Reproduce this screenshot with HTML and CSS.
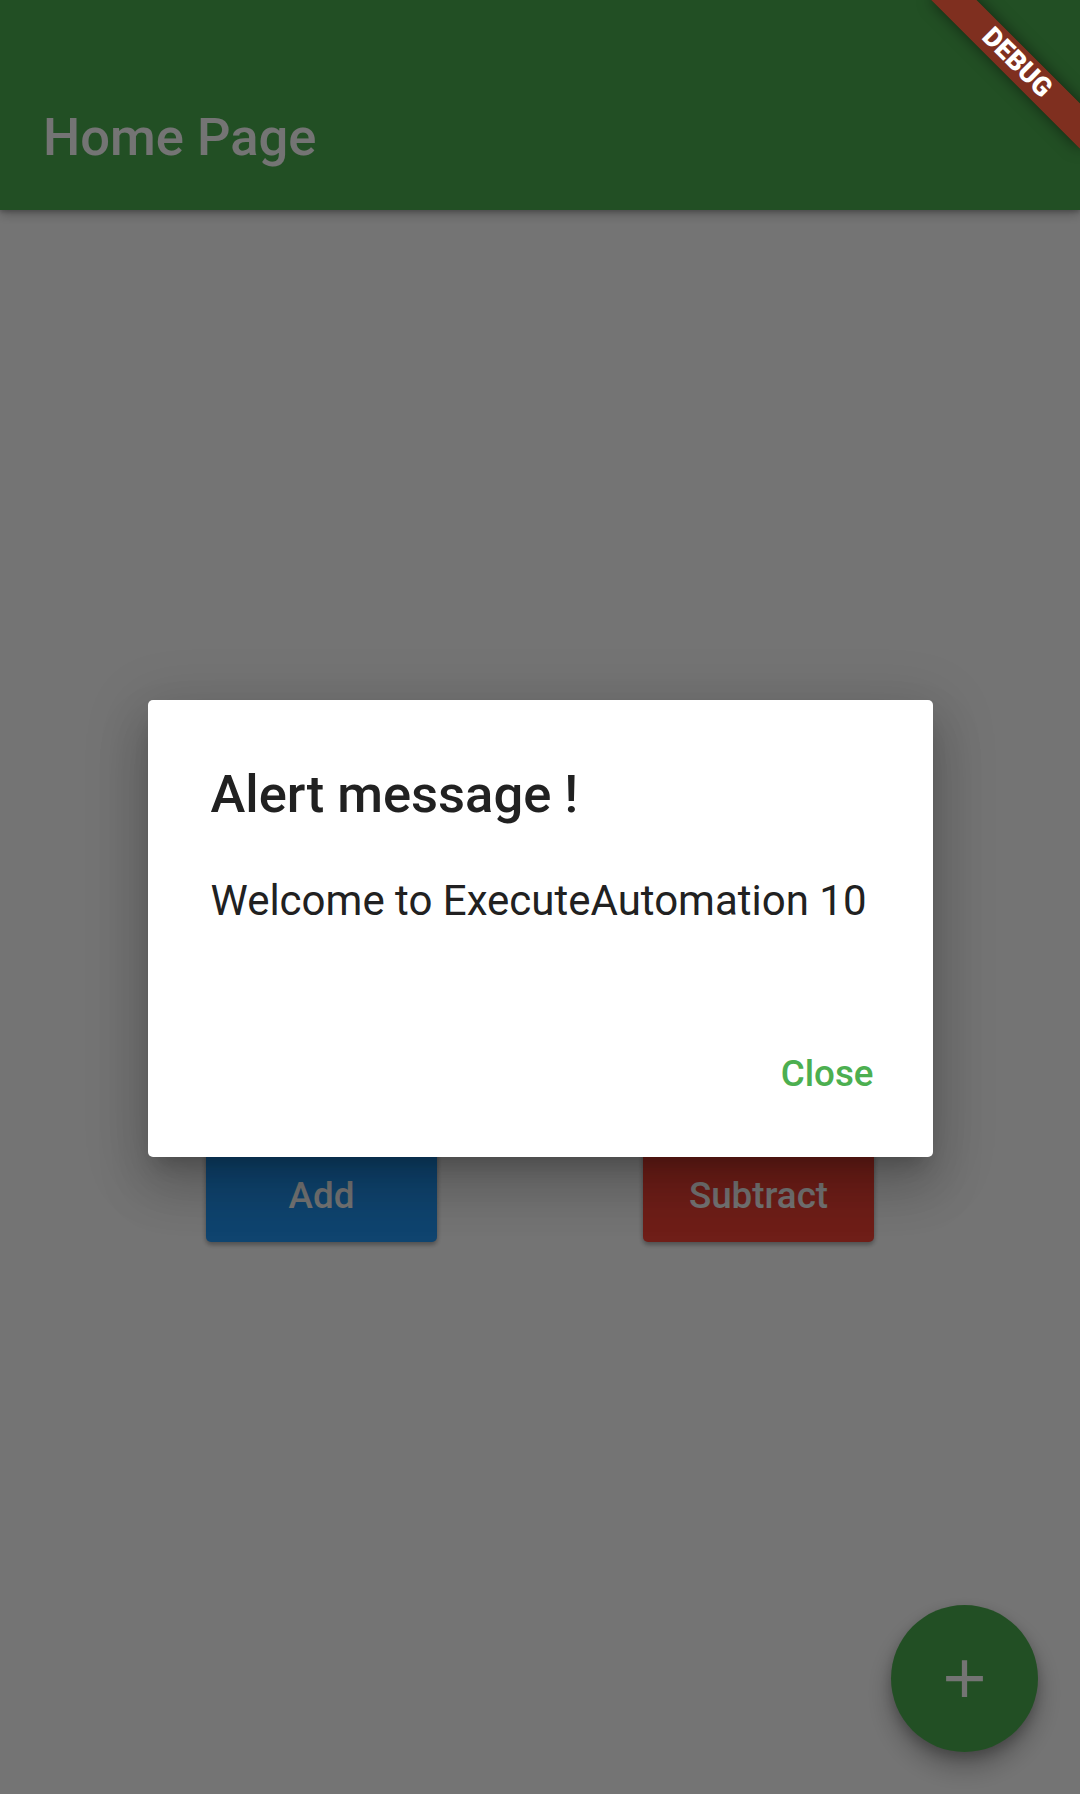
FILE: index.html
```
<!DOCTYPE html>
<html lang="en">
<head>
<meta charset="utf-8">
<title>Home Page</title>
<link rel="stylesheet" href="styles.css">
</head>
<body>
<div class="app">
  <header class="appbar">
    <div class="statusbar"></div>
    <div class="toolbar"><h1 class="title">Home Page</h1></div>
  </header>
  <main class="content">
    <div class="btn-row">
      <button class="btn btn-add">Add</button>
      <button class="btn btn-sub">Subtract</button>
    </div>
  </main>
  <button class="fab" aria-label="Increment">
    <svg class="fab-icon" viewBox="0 0 24 24" width="63" height="63"><path d="M19 13h-6v6h-2v-6H5v-2h6V5h2v6h6v2z" fill="#ffffff"/></svg>
  </button>
</div>
<div class="scrim"></div>
<div class="dialog-layer">
  <div class="dialog" role="alertdialog">
    <h2 class="dialog-title">Alert message !</h2>
    <p class="dialog-content">Welcome to ExecuteAutomation 10</p>
    <div class="dialog-actions">
      <button class="text-btn">Close</button>
    </div>
  </div>
</div>
<div class="banner">DEBUG</div>
</body>
</html>
```
FILE: styles.css
```
* { box-sizing: border-box; }
html, body {
  margin: 0;
  padding: 0;
  width: 1080px;
  height: 1794px;
  overflow: hidden;
  font-family: Roboto, "Noto Sans", "Liberation Sans", sans-serif;
  background: #ffffff;
}
.app {
  position: relative;
  width: 1080px;
  height: 1794px;
  display: flex;
  flex-direction: column;
  background: #ffffff;
}
.appbar {
  flex: 0 0 210px;
  background: #4caf50;
  display: flex;
  flex-direction: column;
  box-shadow: 0 5px 10px rgba(0,0,0,0.22), 0 2px 4px rgba(0,0,0,0.2);
  position: relative;
  z-index: 1;
}
.statusbar { flex: 0 0 63px; }
.toolbar {
  flex: 1;
  display: flex;
  align-items: center;
  padding: 2px 42px 0 43px;
}
.title {
  margin: 0;
  font-size: 52.5px;
  line-height: 61.5px;
  font-weight: 500;
  color: #ffffff;
}
.content {
  flex: 1;
  padding-top: 937px;
}
.btn-row {
  display: flex;
  justify-content: space-evenly;
}
.btn {
  width: 231px;
  height: 94.5px;
  border: 0;
  border-radius: 5px;
  font-family: Roboto, "Noto Sans", sans-serif;
  font-size: 36.75px;
  font-weight: 500;
  color: #ffffff;
  padding: 3px 0 0;
  box-shadow: 0 3px 4px rgba(0,0,0,0.24), 0 1px 6px rgba(0,0,0,0.14);
}
.btn-add { background: #2196f3; }
.btn-sub { background: #f44336; }
.fab {
  position: absolute;
  right: 42px;
  bottom: 42px;
  width: 147px;
  height: 147px;
  border-radius: 50%;
  border: 0;
  padding: 0;
  background: #4caf50;
  display: flex;
  align-items: center;
  justify-content: center;
  box-shadow: 0 15px 26px rgba(0,0,0,0.28), 0 5px 12px rgba(0,0,0,0.2);
}
.fab-icon { display: block; }
.scrim {
  position: absolute;
  inset: 0;
  background: rgba(0,0,0,0.545);
  z-index: 5;
}
.dialog-layer {
  position: absolute;
  top: 63px;
  left: 0;
  right: 0;
  bottom: 0;
  display: flex;
  align-items: center;
  justify-content: center;
  z-index: 6;
}
.dialog {
  width: 785px;
  background: #ffffff;
  border-radius: 5px;
  box-shadow: 0 30px 50px 4px rgba(0,0,0,0.14), 0 12px 60px 10px rgba(0,0,0,0.12), 0 14px 20px -9px rgba(0,0,0,0.2);
  display: flex;
  flex-direction: column;
}
.dialog-title {
  margin: 0;
  padding: 64px 63px 0;
  font-size: 52.5px;
  line-height: 61.5px;
  font-weight: 500;
  color: #212121;
}
.dialog-content {
  margin: 0;
  padding: 50.5px 63px 64px;
  font-size: 42px;
  line-height: 49.2px;
  font-weight: 400;
  color: #212121;
}
.dialog-actions {
  height: 168px;
  display: flex;
  justify-content: flex-end;
  align-items: center;
  padding-right: 17px;
}
.text-btn {
  min-width: 168px;
  height: 94.5px;
  padding: 0 42px;
  border: 0;
  background: transparent;
  font-family: Roboto, "Noto Sans", sans-serif;
  font-size: 36.75px;
  font-weight: 500;
  color: #4caf50;
  line-height: 43px;
}
.banner {
  position: absolute;
  left: 912px;
  top: 47.25px;
  width: 210px;
  height: 31.5px;
  transform: rotate(45deg);
  background: rgba(183,28,28,0.627);
  box-shadow: 0 0 15px rgba(0,0,0,0.5);
  color: #ffffff;
  font-family: Roboto, "Noto Sans", sans-serif;
  font-size: 26.8px;
  font-weight: 900;
  line-height: 31.5px;
  text-align: center;
  z-index: 10;
}
```
